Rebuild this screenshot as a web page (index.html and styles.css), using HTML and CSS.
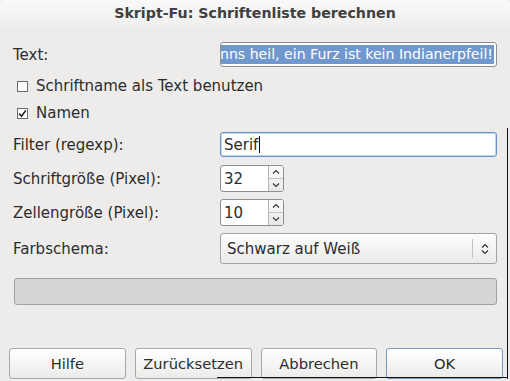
FILE: index.html
```html
<!DOCTYPE html>
<html lang="de">
<head>
    <meta charset="UTF-8">
    <title>Skript-Fu: Schriftenliste berechnen</title>
    <link rel="stylesheet" href="styles.css">
</head>
<body>
    <div class="dialog">
        <div class="titlebar">Skript-Fu: Schriftenliste berechnen</div>

        <div class="form">
            <div class="row row-text">
                <span class="label">Text:</span>
                <div class="entry entry-selected">
                    <span class="selection">nns heil, ein Furz ist kein Indianerpfeil!</span>
                </div>
            </div>

            <label class="check check-first">
                <span class="box"></span>
                <span>Schriftname als Text benutzen</span>
            </label>

            <label class="check check-second">
                <span class="box checked">
                    <svg width="9" height="9" viewBox="0 0 9 9">
                        <path d="M1.2 4.6 L3.5 7.2 L7.8 1.4" fill="none" stroke="#222" stroke-width="1.6"/>
                    </svg>
                </span>
                <span>Namen</span>
            </label>

            <div class="row row-filter">
                <span class="label">Filter (regexp):</span>
                <div class="entry entry-focus">Serif<span class="cursor"></span></div>
            </div>

            <div class="row row-size">
                <span class="label">Schriftgröße (Pixel):</span>
                <div class="spin">
                    <div class="spin-value">32</div>
                    <div class="spin-buttons">
                        <span class="spin-btn">
                            <svg width="8" height="6" viewBox="0 0 8 6"><path d="M1 4.5 L4 1.5 L7 4.5" fill="none" stroke="#333" stroke-width="1.1"/></svg>
                        </span>
                        <span class="spin-btn down">
                            <svg width="8" height="6" viewBox="0 0 8 6"><path d="M1 1.5 L4 4.5 L7 1.5" fill="none" stroke="#333" stroke-width="1.1"/></svg>
                        </span>
                    </div>
                </div>
            </div>

            <div class="row row-cell">
                <span class="label">Zellengröße (Pixel):</span>
                <div class="spin">
                    <div class="spin-value">10</div>
                    <div class="spin-buttons">
                        <span class="spin-btn">
                            <svg width="8" height="6" viewBox="0 0 8 6"><path d="M1 4.5 L4 1.5 L7 4.5" fill="none" stroke="#333" stroke-width="1.1"/></svg>
                        </span>
                        <span class="spin-btn down">
                            <svg width="8" height="6" viewBox="0 0 8 6"><path d="M1 1.5 L4 4.5 L7 1.5" fill="none" stroke="#333" stroke-width="1.1"/></svg>
                        </span>
                    </div>
                </div>
            </div>

            <div class="row row-combo">
                <span class="label">Farbschema:</span>
                <div class="combo">
                    <span class="combo-text">Schwarz auf Weiß</span>
                    <span class="combo-arrow">
                        <svg width="10" height="14" viewBox="0 0 10 14">
                            <path d="M2 5.5 L5 2.5 L8 5.5 M2 8.5 L5 11.5 L8 8.5" fill="none" stroke="#333" stroke-width="1.2"/>
                        </svg>
                    </span>
                </div>
            </div>

            <div class="progress"></div>
        </div>

        <div class="buttons">
            <button type="button">Hilfe</button>
            <button type="button">Zurücksetzen</button>
            <button type="button">Abbrechen</button>
            <button type="button" class="default">OK</button>
        </div>
    </div>

    <div class="edge-right"></div>
    <div class="edge-bottom"></div>
</body>
</html>
```

FILE: styles.css
```css
body {
    margin: 0;
    width: 510px;
    height: 381px;
    overflow: hidden;
    position: relative;
    background-color: #edeceb;
    font-family: "DejaVu Sans", sans-serif;
    font-size: 15px;
    color: #2c2c2c;
}

.dialog {
    display: flex;
    flex-direction: column;
    height: 381px;
}

.titlebar {
    height: 28px;
    line-height: 26px;
    text-align: center;
    font-weight: bold;
    font-size: 14.2px;
    color: #404040;
    background: linear-gradient(#f9f9f9, #efeeed);
    border-top-left-radius: 4px;
    border-top-right-radius: 4px;
}

.form {
    display: flex;
    flex-direction: column;
    padding: 0 13px 0 13px;
}

.row {
    display: flex;
    align-items: center;
}

.label {
    width: 207px;
}

.row-text { margin-top: 14px; height: 25px; }
.row-filter { margin-top: 9px; height: 25px; }
.row-size { margin-top: 8px; height: 27px; }
.row-cell { margin-top: 7px; height: 27px; }
.row-combo { margin-top: 7px; height: 31px; }

.entry {
    box-sizing: border-box;
    width: 277px;
    height: 25px;
    border: 1px solid #8f8f8f;
    border-radius: 3px;
    background-color: #fff;
    display: flex;
    align-items: center;
    padding: 0 3px;
    overflow: hidden;
    white-space: nowrap;
}

.entry-selected {
    justify-content: flex-end;
    padding: 2px;
}

.selection {
    background-color: #6f98cf;
    color: #fff;
    height: 19px;
    line-height: 19px;
    font-size: 14.1px;
    flex-shrink: 0;
    padding-right: 1px;
}

.entry-focus {
    border-color: #6a93c9;
    box-shadow: inset 0 0 0 1px #c5d6ec;
}

.cursor {
    display: inline-block;
    width: 1px;
    height: 17px;
    background-color: #111;
    margin-left: 1px;
}

.check {
    display: flex;
    align-items: center;
    height: 20px;
    padding-left: 4px;
}

.check-first { margin-top: 9px; }
.check-second { margin-top: 7px; }

.box {
    box-sizing: border-box;
    width: 11px;
    height: 11px;
    border: 1px solid #6a6a6a;
    background-color: #fff;
    margin-right: 8px;
    display: flex;
    align-items: center;
    justify-content: center;
}

.spin {
    box-sizing: border-box;
    width: 64px;
    height: 27px;
    display: flex;
    border: 1px solid #8f8f8f;
    border-radius: 3px;
    background-color: #fff;
    overflow: hidden;
}

.spin-value {
    flex: 1;
    padding-left: 3px;
    display: flex;
    align-items: center;
}

.spin-buttons {
    width: 14px;
    display: flex;
    flex-direction: column;
    border-left: 1px solid #b4b4b4;
    background: linear-gradient(#fafafa, #e8e8e8);
}

.spin-btn {
    flex: 1;
    display: flex;
    align-items: center;
    justify-content: center;
}

.spin-btn.down {
    border-top: 1px solid #c4c4c4;
}

.combo {
    box-sizing: border-box;
    width: 277px;
    height: 31px;
    display: flex;
    align-items: center;
    border: 1px solid #a3a3a3;
    border-radius: 3px;
    background: linear-gradient(#fcfcfc, #ebebea);
}

.combo-text {
    flex: 1;
    padding-left: 6px;
}

.combo-arrow {
    width: 23px;
    height: 19px;
    border-left: 1px solid #c2c2c2;
    display: flex;
    align-items: center;
    justify-content: center;
}

.progress {
    box-sizing: border-box;
    margin-top: 14px;
    margin-left: 1px;
    width: 483px;
    height: 27px;
    border: 1px solid #a2a2a2;
    border-radius: 3px;
    background-color: #d6d6d5;
}

.buttons {
    display: flex;
    gap: 9px;
    padding: 0 7px 0 9px;
    margin-top: 43px;
}

button {
    box-sizing: border-box;
    width: 117px;
    height: 31px;
    font-family: "DejaVu Sans", sans-serif;
    font-size: 14.7px;
    color: #2c2c2c;
    border: 1px solid #a8a8a8;
    border-radius: 3px;
    background: linear-gradient(#ffffff, #ebebea);
    padding: 0;
}

button.default {
    border-color: #7796c4;
}

.edge-right {
    position: absolute;
    left: 507px;
    top: 128px;
    width: 1px;
    height: 251px;
    background-color: #111;
}

.edge-bottom {
    position: absolute;
    left: 217px;
    top: 377px;
    width: 291px;
    height: 1px;
    background-color: #111;
}
```
